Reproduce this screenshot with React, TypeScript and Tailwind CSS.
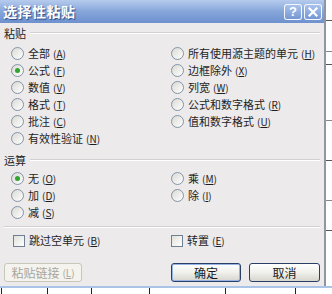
import React from 'react';

const PASTE_LEFT = [
  { label: '全部', key: 'A' },
  { label: '公式', key: 'F', checked: true },
  { label: '数值', key: 'V' },
  { label: '格式', key: 'T' },
  { label: '批注', key: 'C' },
  { label: '有效性验证', key: 'N' },
];

const PASTE_RIGHT = [
  { label: '所有使用源主题的单元', key: 'H' },
  { label: '边框除外', key: 'X' },
  { label: '列宽', key: 'W' },
  { label: '公式和数字格式', key: 'R' },
  { label: '值和数字格式', key: 'U' },
];

const OP_LEFT = [
  { label: '无', key: 'O', checked: true },
  { label: '加', key: 'D' },
  { label: '减', key: 'S' },
];

const OP_RIGHT = [
  { label: '乘', key: 'M' },
  { label: '除', key: 'I' },
];

function Radio({ checked }: { checked?: boolean }) {
  return (
    <span className="w-[13px] h-[13px] rounded-full border border-[#8594a6] bg-gradient-to-br from-[#d9d9d4] to-white flex items-center justify-center shrink-0">
      {checked && <span className="w-[5px] h-[5px] rounded-full bg-[#31a431]" />}
    </span>
  );
}

function Check() {
  return <span className="w-[12px] h-[12px] border border-[#6f7f96] bg-gradient-to-br from-[#e0e0da] to-white shrink-0" />;
}

function Key({ k }: { k: string }) {
  return (
    <span className="text-[10px] ml-[3px]">
      (<span className="underline">{k}</span>)
    </span>
  );
}

function Label({ label, k }: { label: string; k: string }) {
  return (
    <span className="text-[11px] leading-none text-[#1e1e1e] whitespace-nowrap">
      {label}
      <Key k={k} />
    </span>
  );
}

function Option({ label, k, checked }: { label: string; k: string; checked?: boolean }) {
  return (
    <div className="h-[17px] flex items-center gap-[4px]">
      <Radio checked={checked} />
      <Label label={label} k={k} />
    </div>
  );
}

function Header({ title }: { title: string }) {
  return (
    <div className="h-[14px] flex items-center gap-[4px] pr-[4px]">
      <span className="text-[11px] leading-none text-[#1e1e1e]">{title}</span>
      <div className="flex-1 border-t border-[#d2d0cf] border-b border-b-white" />
    </div>
  );
}

function Button({ children, isDefault, disabled, className }: { children: React.ReactNode; isDefault?: boolean; disabled?: boolean; className?: string }) {
  return (
    <div
      className={
        'h-[19px] rounded-[3px] border flex items-center justify-center text-[12px] leading-none ' +
        (disabled
          ? 'border-[#c9c7ba] bg-[#f4f3ee] text-[#a8a69c] '
          : 'border-[#2a3f66] bg-gradient-to-b from-white via-[#f0f0ec] to-[#d6d5ce] text-[#1a1a1a] ') +
        (isDefault ? 'shadow-[inset_0_0_0_1px_#98b4e4] ' : '') +
        (className ?? '')
      }
    >
      {children}
    </div>
  );
}

export default function App() {
  return (
    <div className="w-[332px] h-[294px] overflow-hidden bg-white flex flex-col font-['Noto_Sans_CJK_SC','Noto_Sans',sans-serif]">
      <div className="flex h-[286px]">
        {/* Dialog */}
        <div className="w-[326px] h-full flex flex-col bg-[#eceaeb] border-r-2 border-[#8e96a4]">
          {/* Title bar */}
          <div className="h-[23px] shrink-0 flex items-center justify-between pl-[3px] pr-[2px] bg-gradient-to-b from-[#b6cbec] via-[#86a6da] to-[#6e91cf]">
            <span className="text-[14px] font-bold text-white tracking-[0.5px] [text-shadow:1px_1px_1px_#2b4a86]">选择性粘贴</span>
            <div className="flex gap-[2px]">
              <div className="w-[18px] h-[16px] rounded-[3px] border border-white/90 bg-gradient-to-b from-[#a9c2ec] to-[#7597d3] flex items-center justify-center text-white text-[13px] font-bold leading-none font-['Liberation_Sans',sans-serif]">?</div>
              <div className="w-[18px] h-[16px] rounded-[3px] border border-white/90 bg-gradient-to-b from-[#a9c2ec] to-[#7597d3] flex items-center justify-center">
                <svg width="10" height="10" viewBox="0 0 10 10">
                  <path d="M1.5 1.5 L8.5 8.5 M8.5 1.5 L1.5 8.5" stroke="white" strokeWidth="2.2" strokeLinecap="square" />
                </svg>
              </div>
            </div>
          </div>

          {/* Body */}
          <div className="flex-1 flex flex-col pl-[4px] pt-[3px]">
            <Header title="粘贴" />
            <div className="mt-[5px] flex pl-[7px]">
              <div className="w-[160px] flex flex-col">
                {PASTE_LEFT.map((o) => (
                  <Option key={o.key} label={o.label} k={o.key} checked={o.checked} />
                ))}
              </div>
              <div className="flex flex-col">
                {PASTE_RIGHT.map((o) => (
                  <Option key={o.key} label={o.label} k={o.key} />
                ))}
              </div>
            </div>

            <div className="mt-[6px]">
              <Header title="运算" />
            </div>
            <div className="mt-[3px] flex pl-[7px]">
              <div className="w-[160px] flex flex-col">
                {OP_LEFT.map((o) => (
                  <Option key={o.key} label={o.label} k={o.key} checked={o.checked} />
                ))}
              </div>
              <div className="flex flex-col">
                {OP_RIGHT.map((o) => (
                  <Option key={o.key} label={o.label} k={o.key} />
                ))}
              </div>
            </div>

            <div className="mt-[5px] mr-[4px] border-t border-[#d2d0cf] border-b border-b-white" />

            <div className="mt-[4px] flex pl-[9px]">
              <div className="w-[158px] h-[17px] flex items-center gap-[4px]">
                <Check />
                <Label label="跳过空单元" k="B" />
              </div>
              <div className="h-[17px] flex items-center gap-[4px]">
                <Check />
                <Label label="转置" k="E" />
              </div>
            </div>

            <div className="mt-[14px] flex items-center">
              <Button disabled className="w-[78px] text-[11px]">
                粘贴链接<Key k="L" />
              </Button>
              <Button isDefault className="w-[70px] ml-[89px]">确定</Button>
              <Button className="w-[71px] ml-[8px]">取消</Button>
            </div>
          </div>
        </div>

        {/* Sheet on the right */}
        <div className="flex-1 flex flex-col bg-white">
          <div className="h-[21px] border-b border-[#555]" />
          <div className="h-[31px] border-b border-[#888]" />
          <div className="h-[13px] border-b border-[#555]" />
          <div className="h-[56px] border-b border-[#888]" />
          <div className="h-[40px] border-b border-[#555]" />
          <div className="h-[40px] border-b border-[#888]" />
          <div className="h-[30px] border-b border-[#555]" />
        </div>
      </div>

      {/* Sheet below */}
      <div className="flex-1 flex flex-col">
        <div className="h-[2px] bg-[#a9c4e6]" />
        <div className="flex-1 flex">
          <div className="w-[2px] border-r border-[#222]" />
          <div className="w-[46px] border-r border-[#222]" />
          <div className="w-[44px] border-r border-[#222]" />
          <div className="w-[58px] border-r border-[#222]" />
          <div className="w-[76px] border-r border-[#222]" />
          <div className="w-[70px] border-r border-[#222]" />
        </div>
      </div>
    </div>
  );
}
